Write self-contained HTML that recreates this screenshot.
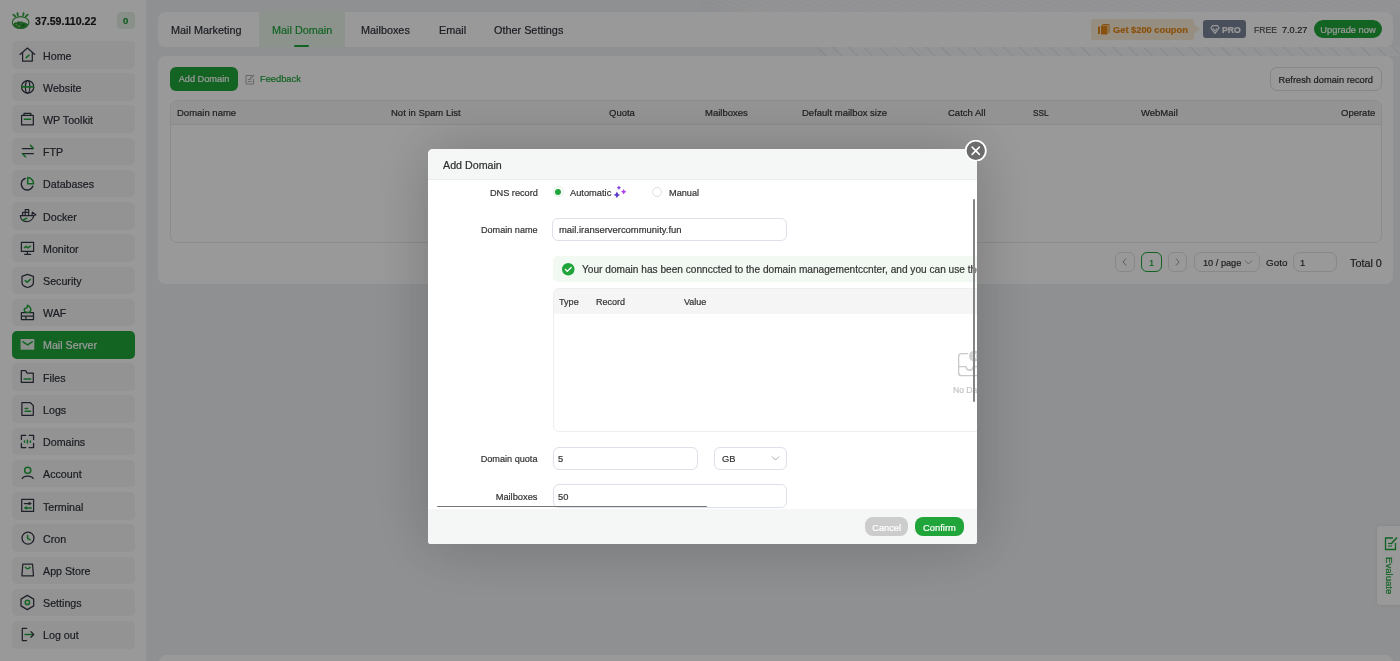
<!DOCTYPE html><html><head><meta charset="utf-8"><style>
html,body{margin:0;padding:0;width:1400px;height:661px;overflow:hidden;background:#eef0f3;font-family:"Liberation Sans",sans-serif;}
.t{position:absolute;white-space:nowrap;will-change:transform;-webkit-text-stroke:0.2px currentColor;}
</style></head><body>
<div style="position:absolute;left:700px;top:0px;width:700px;height:12px;box-sizing:border-box;background:repeating-linear-gradient(20deg, rgba(150,158,185,0) 0px, rgba(150,158,185,0) 3px, rgba(150,158,185,0.12) 3.5px, rgba(150,158,185,0) 4px), linear-gradient(90deg, rgba(255,255,255,0) 0px, rgba(255,255,255,0.4) 60px);"></div>
<div style="position:absolute;left:815px;top:47px;width:585px;height:9px;box-sizing:border-box;background:repeating-linear-gradient(45deg, rgba(150,158,185,0.0) 0px, rgba(150,158,185,0.0) 7px, rgba(150,158,185,0.22) 7.5px, rgba(150,158,185,0.0) 9px, rgba(150,158,185,0) 11px), linear-gradient(90deg, rgba(255,255,255,0) 0px, rgba(255,255,255,0.45) 30px);"></div>
<div style="position:absolute;left:0px;top:0px;width:146px;height:661px;box-sizing:border-box;background:#fff;"></div>
<svg style="position:absolute;left:8px;top:8px" width="30" height="26" viewBox="0 0 30 26">
<path d="M5 17 C6 14.5 7.5 13.8 8.6 14.6 C9.8 13.2 11.3 13 12.2 13.9 C13.5 13.2 15 13.6 15.7 14.6 C17 14 18.6 14.8 20 16.5 C19 19.5 16 20.6 12.6 20.6 C9 20.6 6 19.5 5 17 Z" fill="#2f9638"/>
<circle cx="11" cy="18.3" r="1.4" fill="#74b865"/><circle cx="15.5" cy="17.2" r="1.1" fill="#1f7a2d"/><circle cx="8.3" cy="16.6" r="0.9" fill="#8cc476"/><circle cx="13.5" cy="15.5" r="0.8" fill="#5fae55"/>
<ellipse cx="12.6" cy="14.5" rx="8.3" ry="5.9" fill="none" stroke="#38a040" stroke-width="1.15"/>
<g fill="#3aa345"><ellipse cx="6.3" cy="7.6" rx="1.0" ry="2.3" transform="rotate(-50 6.3 7.6)"/><ellipse cx="9.6" cy="6.2" rx="1.0" ry="2.3" transform="rotate(-12 9.6 6.2)"/><ellipse cx="15.4" cy="6.2" rx="1.0" ry="2.3" transform="rotate(12 15.4 6.2)"/><ellipse cx="18.8" cy="7.6" rx="1.0" ry="2.3" transform="rotate(50 18.8 7.6)"/></g>
</svg>
<div class="t" style="left:35px;top:13.30px;font-size:10.6px;line-height:16px;color:#1b1b1b;font-weight:bold;">37.59.110.22</div>
<div style="position:absolute;left:117px;top:12px;width:17.5px;height:17px;box-sizing:border-box;background:#e3f1e5;border-radius:4px;"></div>
<div class="t" style="left:117.2px;top:13.30px;font-size:9.6px;line-height:16px;color:#1f9a38;font-weight:bold;width:17.5px;text-align:center;">0</div>
<div style="position:absolute;left:12px;top:41.0px;width:122.5px;height:27.599999999999994px;box-sizing:border-box;background:#f5f6f7;border-radius:5px;"></div>
<svg style="position:absolute;left:15px;top:44px" width="25" height="20" viewBox="0 0 25 20" stroke-linecap="round" stroke-linejoin="round"><path d="M5 10.4 L12.4 4.1 L19.8 10.4" stroke="#323743" stroke-width="1.25" fill="none"/><path d="M7.6 8.6 V17.1 H17.3 V8.6" stroke="#323743" stroke-width="1.25" fill="none"/><path d="M11.2 13.7 L14.1 11.2" stroke="#20a53a" stroke-width="1.55" fill="none"/></svg>
<div class="t" style="left:42.5px;top:47.50px;font-size:10.7px;line-height:16px;color:#2d3139;font-weight:normal;">Home</div>
<div style="position:absolute;left:12px;top:73.22px;width:122.5px;height:27.599999999999994px;box-sizing:border-box;background:#f5f6f7;border-radius:5px;"></div>
<svg style="position:absolute;left:15px;top:76px" width="25" height="20" viewBox="0 0 25 20" stroke-linecap="round" stroke-linejoin="round"><ellipse cx="12.7" cy="10.9" rx="6.1" ry="6.2" stroke="#323743" stroke-width="1.25" fill="none"/><ellipse cx="12.6" cy="10.9" rx="2.2" ry="6.2" stroke="#323743" stroke-width="1.2" fill="none"/><path d="M7.2 10.9 H18.2" stroke="#20a53a" stroke-width="1.7" fill="none"/></svg>
<div class="t" style="left:42.5px;top:79.72px;font-size:10.7px;line-height:16px;color:#2d3139;font-weight:normal;">Website</div>
<div style="position:absolute;left:12px;top:105.44px;width:122.5px;height:27.599999999999994px;box-sizing:border-box;background:#f5f6f7;border-radius:5px;"></div>
<svg style="position:absolute;left:15px;top:108px" width="25" height="20" viewBox="0 0 25 20" stroke-linecap="round" stroke-linejoin="round"><path d="M6.6 7.3 H18.3 V16.9 H6.6 Z" stroke="#323743" stroke-width="1.25" fill="none"/><path d="M9 7.2 V5.4 H15.8 V7.2" stroke="#323743" stroke-width="1.25" fill="none"/><path d="M9.4 11.2 H15.6" stroke="#20a53a" stroke-width="1.55" fill="none"/></svg>
<div class="t" style="left:42.5px;top:111.94px;font-size:10.7px;line-height:16px;color:#2d3139;font-weight:normal;">WP Toolkit</div>
<div style="position:absolute;left:12px;top:137.66px;width:122.5px;height:27.599999999999994px;box-sizing:border-box;background:#f5f6f7;border-radius:5px;"></div>
<svg style="position:absolute;left:15px;top:140px" width="25" height="20" viewBox="0 0 25 20" stroke-linecap="round" stroke-linejoin="round"><path d="M7.4 8.5 H18.4" stroke="#323743" stroke-width="1.25" fill="none"/><path d="M7.4 13.6 H18.4" stroke="#323743" stroke-width="1.25" fill="none"/><path d="M15.5 5.4 L18.3 8.3" stroke="#20a53a" stroke-width="1.55" fill="none"/><path d="M7.6 13.8 L10.5 16.8" stroke="#20a53a" stroke-width="1.55" fill="none"/></svg>
<div class="t" style="left:42.5px;top:144.16px;font-size:10.7px;line-height:16px;color:#2d3139;font-weight:normal;">FTP</div>
<div style="position:absolute;left:12px;top:169.88px;width:122.5px;height:27.599999999999994px;box-sizing:border-box;background:#f5f6f7;border-radius:5px;"></div>
<svg style="position:absolute;left:15px;top:172px" width="25" height="20" viewBox="0 0 25 20" stroke-linecap="round" stroke-linejoin="round"><path d="M10.3 6.3 A6.0 6.0 0 1 0 17.9 14.0" stroke="#323743" stroke-width="1.25" fill="none"/><path d="M12.7 5.6 V11.7 H18.6 A6.0 6.0 0 0 0 12.7 5.6 Z" stroke="#20a53a" stroke-width="1.55" fill="none"/></svg>
<div class="t" style="left:42.5px;top:176.38px;font-size:10.7px;line-height:16px;color:#2d3139;font-weight:normal;">Databases</div>
<div style="position:absolute;left:12px;top:202.1px;width:122.5px;height:27.599999999999994px;box-sizing:border-box;background:#f5f6f7;border-radius:5px;"></div>
<svg style="position:absolute;left:15px;top:205px" width="25" height="20" viewBox="0 0 25 20" stroke-linecap="round" stroke-linejoin="round"><path d="M5.4 10.6 H17.8 C18.8 10.6 19.6 10.2 20.7 9.8 M5.4 10.6 C5.4 14.2 8 16.6 11.5 16.6 C15.5 16.6 18.2 13.6 18.9 10.6" stroke="#323743" stroke-width="1.25" fill="none"/><path d="M7.6 10.4 V7.4 H10.2 V10.4 M10.2 10.4 V4.6 H13.7 V10.4 M10.2 7.4 H13.7" stroke="#323743" stroke-width="1.2" fill="none"/><path d="M17 10.2 L17.4 7.2 L20.7 9.8" stroke="#323743" stroke-width="1.2" fill="none"/><path d="M8 15.1 L11.7 13.3" stroke="#20a53a" stroke-width="1.55" fill="none"/></svg>
<div class="t" style="left:42.5px;top:208.60px;font-size:10.7px;line-height:16px;color:#2d3139;font-weight:normal;">Docker</div>
<div style="position:absolute;left:12px;top:234.32px;width:122.5px;height:27.600000000000023px;box-sizing:border-box;background:#f5f6f7;border-radius:5px;"></div>
<svg style="position:absolute;left:15px;top:237px" width="25" height="20" viewBox="0 0 25 20" stroke-linecap="round" stroke-linejoin="round"><path d="M6.4 5.3 H18.6 V14.4 H6.4 Z" stroke="#323743" stroke-width="1.25" fill="none"/><path d="M12.4 14.5 V17.2 M9.6 17.3 H15.6" stroke="#323743" stroke-width="1.25" fill="none"/><path d="M9.4 10.6 L11.3 9.4 L13 11 L15.4 9.2" stroke="#20a53a" stroke-width="1.55" fill="none"/></svg>
<div class="t" style="left:42.5px;top:240.82px;font-size:10.7px;line-height:16px;color:#2d3139;font-weight:normal;">Monitor</div>
<div style="position:absolute;left:12px;top:266.54px;width:122.5px;height:27.599999999999966px;box-sizing:border-box;background:#f5f6f7;border-radius:5px;"></div>
<svg style="position:absolute;left:15px;top:270px" width="25" height="20" viewBox="0 0 25 20" stroke-linecap="round" stroke-linejoin="round"><path d="M12.5 4.3 L18.4 6.4 V12.6 C18.4 14.8 15.8 16.8 12.6 17.5 C9.4 16.8 7 14.8 7 12.6 V6.4 Z" stroke="#323743" stroke-width="1.25" fill="none"/><path d="M10.3 10.6 L12.2 12.3 L15.3 9.4" stroke="#20a53a" stroke-width="1.55" fill="none"/></svg>
<div class="t" style="left:42.5px;top:273.04px;font-size:10.7px;line-height:16px;color:#2d3139;font-weight:normal;">Security</div>
<div style="position:absolute;left:12px;top:298.76px;width:122.5px;height:27.600000000000023px;box-sizing:border-box;background:#f5f6f7;border-radius:5px;"></div>
<svg style="position:absolute;left:15px;top:302px" width="25" height="20" viewBox="0 0 25 20" stroke-linecap="round" stroke-linejoin="round"><path d="M6.4 10.6 H18.5 V17.6 H6.4 Z M6.4 14.1 H18.5 M10.9 14.1 V17.6" stroke="#323743" stroke-width="1.25" fill="none"/><path d="M12.4 3.2 C14.5 4.5 15.9 6.2 15.9 8 C15.9 9.6 14.3 10.4 12.4 10.4 C10.5 10.4 9.2 9.4 9.2 7.8 C9.2 6.8 10 6.2 10.8 6.2 C11.6 6.2 12.4 5.5 12.4 3.2 Z" stroke="#20a53a" stroke-width="1.4" fill="none"/></svg>
<div class="t" style="left:42.5px;top:305.26px;font-size:10.7px;line-height:16px;color:#2d3139;font-weight:normal;">WAF</div>
<div style="position:absolute;left:12px;top:330.98px;width:122.5px;height:27.599999999999966px;box-sizing:border-box;background:#20a53a;border-radius:5px;"></div>
<svg style="position:absolute;left:15px;top:334px" width="25" height="20" viewBox="0 0 25 20" stroke-linecap="round" stroke-linejoin="round"><rect x="5.6" y="5" width="13.7" height="10.7" fill="#e6f2e8"/><path d="M8 7.8 L12.6 10.8 L17.2 7.8" stroke="#20a53a" stroke-width="1.5" fill="none"/></svg>
<div class="t" style="left:42.5px;top:337.48px;font-size:10.7px;line-height:16px;color:#fff;font-weight:normal;">Mail Server</div>
<div style="position:absolute;left:12px;top:363.2px;width:122.5px;height:27.600000000000023px;box-sizing:border-box;background:#f5f6f7;border-radius:5px;"></div>
<svg style="position:absolute;left:15px;top:366px" width="25" height="20" viewBox="0 0 25 20" stroke-linecap="round" stroke-linejoin="round"><path d="M6.3 4.7 H10.6 L12.1 7.1 H18.3 V16.3 H6.3 Z" stroke="#323743" stroke-width="1.25" fill="none"/><path d="M9.2 13 H15.6" stroke="#20a53a" stroke-width="1.7" fill="none"/></svg>
<div class="t" style="left:42.5px;top:369.70px;font-size:10.7px;line-height:16px;color:#2d3139;font-weight:normal;">Files</div>
<div style="position:absolute;left:12px;top:395.42px;width:122.5px;height:27.599999999999966px;box-sizing:border-box;background:#f5f6f7;border-radius:5px;"></div>
<svg style="position:absolute;left:15px;top:399px" width="25" height="20" viewBox="0 0 25 20" stroke-linecap="round" stroke-linejoin="round"><path d="M6.9 3.5 H15.2 L18.3 6.6 V16.3 H6.9 Z" stroke="#323743" stroke-width="1.25" fill="none"/><path d="M10.1 9.4 H12.6 M10.1 12.3 H15.6" stroke="#20a53a" stroke-width="1.55" fill="none"/></svg>
<div class="t" style="left:42.5px;top:401.92px;font-size:10.7px;line-height:16px;color:#2d3139;font-weight:normal;">Logs</div>
<div style="position:absolute;left:12px;top:427.64px;width:122.5px;height:27.600000000000023px;box-sizing:border-box;background:#f5f6f7;border-radius:5px;"></div>
<svg style="position:absolute;left:15px;top:431px" width="25" height="20" viewBox="0 0 25 20" stroke-linecap="round" stroke-linejoin="round"><path d="M6.4 8.5 V4.3 H10.8 M14.2 4.3 H18.6 V8.5 M18.6 12.5 V16.6 H14.2 M10.8 16.6 H6.4 V12.5" stroke="#323743" stroke-width="1.3" fill="none"/><path d="M9.5 9.9 V11.3 M12.4 9.2 V12 M15.4 9.9 V11.3" stroke="#20a53a" stroke-width="1.5" fill="none"/></svg>
<div class="t" style="left:42.5px;top:434.14px;font-size:10.7px;line-height:16px;color:#2d3139;font-weight:normal;">Domains</div>
<div style="position:absolute;left:12px;top:459.86px;width:122.5px;height:27.599999999999966px;box-sizing:border-box;background:#f5f6f7;border-radius:5px;"></div>
<svg style="position:absolute;left:15px;top:463px" width="25" height="20" viewBox="0 0 25 20" stroke-linecap="round" stroke-linejoin="round"><circle cx="12.7" cy="7.3" r="3.1" stroke="#20a53a" stroke-width="1.5" fill="none"/><path d="M7.2 15.5 C8.8 12.2 16.6 12.2 18.2 15.5" stroke="#323743" stroke-width="1.25" fill="none"/></svg>
<div class="t" style="left:42.5px;top:466.36px;font-size:10.7px;line-height:16px;color:#2d3139;font-weight:normal;">Account</div>
<div style="position:absolute;left:12px;top:492.08px;width:122.5px;height:27.599999999999966px;box-sizing:border-box;background:#f5f6f7;border-radius:5px;"></div>
<svg style="position:absolute;left:15px;top:495px" width="25" height="20" viewBox="0 0 25 20" stroke-linecap="round" stroke-linejoin="round"><path d="M6.7 4.4 H18.6 V16.4 H6.7 Z" stroke="#323743" stroke-width="1.25" fill="none"/><path d="M9.3 8.5 H15.5" stroke="#323743" stroke-width="1.25" fill="none"/><path d="M14.2 7.2 L16.4 8.5 L14.2 9.8 Z" fill="#323743" stroke="#323743" stroke-width="0.6"/><path d="M16.3 12.9 H10.5" stroke="#20a53a" stroke-width="1.55" fill="none"/><path d="M11.4 11.5 L9.2 12.9 L11.4 14.3 Z" fill="#20a53a" stroke="#20a53a" stroke-width="0.6"/></svg>
<div class="t" style="left:42.5px;top:498.58px;font-size:10.7px;line-height:16px;color:#2d3139;font-weight:normal;">Terminal</div>
<div style="position:absolute;left:12px;top:524.3px;width:122.5px;height:27.600000000000023px;box-sizing:border-box;background:#f5f6f7;border-radius:5px;"></div>
<svg style="position:absolute;left:15px;top:528px" width="25" height="20" viewBox="0 0 25 20" stroke-linecap="round" stroke-linejoin="round"><circle cx="13.0" cy="10.1" r="6.0" stroke="#323743" stroke-width="1.3" fill="none"/><path d="M12.6 7.4 V10.3 L15.2 11.8" stroke="#20a53a" stroke-width="1.55" fill="none"/></svg>
<div class="t" style="left:42.5px;top:530.80px;font-size:10.7px;line-height:16px;color:#2d3139;font-weight:normal;">Cron</div>
<div style="position:absolute;left:12px;top:556.52px;width:122.5px;height:27.600000000000023px;box-sizing:border-box;background:#f5f6f7;border-radius:5px;"></div>
<svg style="position:absolute;left:15px;top:560px" width="25" height="20" viewBox="0 0 25 20" stroke-linecap="round" stroke-linejoin="round"><path d="M7.8 4.2 H17.5 L18.5 15.8 H6.9 Z" stroke="#323743" stroke-width="1.25" fill="none"/><path d="M10.5 7.3 C11.3 9.1 13.9 9.1 14.9 7.3" stroke="#20a53a" stroke-width="1.55" fill="none"/></svg>
<div class="t" style="left:42.5px;top:563.02px;font-size:10.7px;line-height:16px;color:#2d3139;font-weight:normal;">App Store</div>
<div style="position:absolute;left:12px;top:588.74px;width:122.5px;height:27.600000000000023px;box-sizing:border-box;background:#f5f6f7;border-radius:5px;"></div>
<svg style="position:absolute;left:15px;top:592px" width="25" height="20" viewBox="0 0 25 20" stroke-linecap="round" stroke-linejoin="round"><path d="M12.3 3.4 L18.7 7.1 V13.9 L12.3 17.6 L6 13.9 V7.1 Z" stroke="#323743" stroke-width="1.25" fill="none"/><circle cx="12.4" cy="10.45" r="2.1" stroke="#20a53a" stroke-width="1.5" fill="none"/></svg>
<div class="t" style="left:42.5px;top:595.24px;font-size:10.7px;line-height:16px;color:#2d3139;font-weight:normal;">Settings</div>
<div style="position:absolute;left:12px;top:620.96px;width:122.5px;height:27.59999999999991px;box-sizing:border-box;background:#f5f6f7;border-radius:5px;"></div>
<svg style="position:absolute;left:15px;top:624px" width="25" height="20" viewBox="0 0 25 20" stroke-linecap="round" stroke-linejoin="round"><path d="M11.6 4.4 H7.3 V16.5 H11.6" stroke="#323743" stroke-width="1.25" fill="none"/><path d="M10.1 10.45 H18.2" stroke="#20a53a" stroke-width="1.55" fill="none"/><path d="M15.9 7.6 L18.7 10.45 L15.9 13.3" stroke="#323743" stroke-width="1.25" fill="none"/></svg>
<div class="t" style="left:42.5px;top:627.46px;font-size:10.7px;line-height:16px;color:#2d3139;font-weight:normal;">Log out</div>
<div style="position:absolute;left:158px;top:12px;width:1235px;height:35px;box-sizing:border-box;background:#fff;border-radius:7px;overflow:hidden;"></div>
<div style="position:absolute;left:259px;top:12px;width:86px;height:35px;box-sizing:border-box;background:#e9f5eb;"></div>
<div style="position:absolute;left:294px;top:45px;width:15px;height:2px;box-sizing:border-box;background:#20a53a;border-radius:1px;"></div>
<div class="t" style="left:171.4px;top:21.90px;font-size:10.85px;line-height:16px;color:#2d3139;font-weight:normal;">Mail Marketing</div>
<div class="t" style="left:272px;top:21.90px;font-size:10.85px;line-height:16px;color:#20a53a;font-weight:normal;">Mail Domain</div>
<div class="t" style="left:361px;top:21.90px;font-size:10.85px;line-height:16px;color:#2d3139;font-weight:normal;">Mailboxes</div>
<div class="t" style="left:439.4px;top:21.90px;font-size:10.85px;line-height:16px;color:#2d3139;font-weight:normal;">Email</div>
<div class="t" style="left:494.3px;top:21.90px;font-size:10.85px;line-height:16px;color:#2d3139;font-weight:normal;">Other Settings</div>
<div style="position:absolute;left:1091px;top:18.6px;width:103px;height:21.1px;box-sizing:border-box;background:#fbeed8;border-radius:2px;"></div>
<div style="position:absolute;left:1194px;top:23.5px;width:0;height:0;border-top:5.5px solid transparent;border-bottom:5.5px solid transparent;border-left:6px solid #fbeed8;"></div>
<svg style="position:absolute;left:1097.5px;top:24px" width="12" height="11" viewBox="0 0 12 11"><rect x="0" y="2.5" width="2" height="7.5" fill="#e3881a"/><rect x="3" y="1.5" width="6.5" height="9" fill="#e3881a"/><path d="M4.5 0.5 H11 V9" fill="none" stroke="#e3881a" stroke-width="1"/></svg>
<div class="t" style="left:1112.5px;top:22.00px;font-size:9.3px;line-height:16px;color:#e3881a;font-weight:bold;">Get $200 coupon</div>
<div style="position:absolute;left:1203px;top:20.3px;width:43px;height:17.499999999999996px;box-sizing:border-box;background:#7a8599;border-radius:3px;"></div>
<svg style="position:absolute;left:1209.5px;top:24.8px" width="10" height="9" viewBox="0 0 10 9"><path d="M0.8 3 L2.6 0.7 H7.4 L9.2 3 L5 8.3 Z" fill="none" stroke="#fff" stroke-width="1.2" stroke-linejoin="round"/><path d="M2.8 3.4 L5 6 L7.2 3.4" fill="none" stroke="#fff" stroke-width="1.1"/></svg>
<div class="t" style="left:1222.4px;top:22.00px;font-size:8.7px;line-height:16px;color:#fff;font-weight:bold;">PRO</div>
<div class="t" style="left:1253.7px;top:22.00px;font-size:8.6px;line-height:16px;color:#555;font-weight:normal;">FREE</div>
<div class="t" style="left:1282.3px;top:22.00px;font-size:9.1px;line-height:16px;color:#333;font-weight:normal;">7.0.27</div>
<div style="position:absolute;left:1313.6px;top:20.3px;width:68.10000000000014px;height:17.499999999999996px;box-sizing:border-box;background:#20a53a;border-radius:9px;"></div>
<div class="t" style="left:1313.6px;top:22.00px;font-size:9.3px;line-height:16px;color:#fff;font-weight:normal;width:68px;text-align:center;">Upgrade now</div>
<div style="position:absolute;left:158px;top:55.7px;width:1234.5px;height:228.3px;box-sizing:border-box;background:#fff;border-radius:7px;"></div>
<div style="position:absolute;left:170px;top:67.3px;width:68px;height:23.5px;box-sizing:border-box;background:#20a53a;border-radius:6px;"></div>
<div class="t" style="left:170px;top:71.40px;font-size:9.2px;line-height:16px;color:#fff;font-weight:normal;width:68px;text-align:center;">Add Domain</div>
<svg style="position:absolute;left:245px;top:73.5px" width="10" height="11" viewBox="0 0 10 11"><path d="M7 1.5 H1 V10 H8.5 V5" fill="none" stroke="#aaa" stroke-width="1"/><path d="M3 5.5 H5.5 M3 7.5 H6.5" stroke="#aaa" stroke-width="1"/><path d="M5 5 L9 1" stroke="#aaa" stroke-width="1.2"/></svg>
<div class="t" style="left:260px;top:71.10px;font-size:9.3px;line-height:16px;color:#20a53a;font-weight:normal;">Feedback</div>
<div style="position:absolute;left:1270.2px;top:67.2px;width:111.5px;height:23.5px;box-sizing:border-box;border:1px solid #dcdfe6;border-radius:7px;"></div>
<div class="t" style="left:1270.2px;top:71.80px;font-size:9.3px;line-height:16px;color:#333;font-weight:normal;width:111.5px;text-align:center;">Refresh domain record</div>
<div style="position:absolute;left:170px;top:100px;width:1211.5px;height:143px;box-sizing:border-box;border:1px solid #e8e9ec;border-radius:7px;overflow:hidden;"></div>
<div style="position:absolute;left:171px;top:101px;width:1209.5px;height:23.5px;box-sizing:border-box;background:#f6f6f7;border-bottom:1px solid #e8e9ec;border-radius:6px 6px 0 0;"></div>
<div class="t" style="left:176.9px;top:105.00px;font-size:9.5px;line-height:16px;color:#333;font-weight:normal;">Domain name</div>
<div class="t" style="left:391px;top:105.00px;font-size:9.5px;line-height:16px;color:#333;font-weight:normal;">Not in Spam List</div>
<div class="t" style="left:608.8px;top:105.00px;font-size:9.5px;line-height:16px;color:#333;font-weight:normal;">Quota</div>
<div class="t" style="left:705.4px;top:105.00px;font-size:9.5px;line-height:16px;color:#333;font-weight:normal;">Mailboxes</div>
<div class="t" style="left:802.3px;top:105.00px;font-size:9.5px;line-height:16px;color:#333;font-weight:normal;">Default mailbox size</div>
<div class="t" style="left:947.8px;top:105.00px;font-size:9.5px;line-height:16px;color:#333;font-weight:normal;">Catch All</div>
<div class="t" style="left:1141.1px;top:105.00px;font-size:9.5px;line-height:16px;color:#333;font-weight:normal;">WebMail</div>
<div class="t" style="left:1032.5px;top:105.00px;font-size:8.3px;line-height:16px;color:#333;font-weight:normal;">SSL</div>
<div class="t" style="right:25px;top:105.00px;font-size:9.5px;line-height:16px;color:#333;font-weight:normal;">Operate</div>
<div style="position:absolute;left:1114.6px;top:252.1px;width:20.100000000000136px;height:19.799999999999983px;box-sizing:border-box;border:1px solid #e1e3e8;border-radius:6px;"></div>
<svg style="position:absolute;left:1120px;top:257px" width="9" height="10" viewBox="0 0 9 10"><path d="M6 1.5 L3 5 L6 8.5" fill="none" stroke="#999" stroke-width="1"/></svg>
<div style="position:absolute;left:1140.7px;top:252.1px;width:21.0px;height:19.799999999999983px;box-sizing:border-box;border:1px solid #20a53a;border-radius:6px;"></div>
<div class="t" style="left:1140.7px;top:254.50px;font-size:9.3px;line-height:16px;color:#20a53a;font-weight:normal;width:21px;text-align:center;">1</div>
<div style="position:absolute;left:1167.5px;top:252.1px;width:19.90000000000009px;height:19.799999999999983px;box-sizing:border-box;border:1px solid #e1e3e8;border-radius:6px;"></div>
<svg style="position:absolute;left:1173px;top:257px" width="9" height="10" viewBox="0 0 9 10"><path d="M3 1.5 L6 5 L3 8.5" fill="none" stroke="#999" stroke-width="1"/></svg>
<div style="position:absolute;left:1193.6px;top:252.1px;width:66.30000000000018px;height:19.799999999999983px;box-sizing:border-box;border:1px solid #e1e3e8;border-radius:7px;"></div>
<div class="t" style="left:1202.9px;top:254.50px;font-size:9.2px;line-height:16px;color:#333;font-weight:normal;">10 / page</div>
<svg style="position:absolute;left:1244px;top:258px" width="9" height="8" viewBox="0 0 9 8"><path d="M1 2.5 L4.5 6 L8 2.5" fill="none" stroke="#aaa" stroke-width="1"/></svg>
<div class="t" style="left:1265.6px;top:254.50px;font-size:9.9px;line-height:16px;color:#333;font-weight:normal;">Goto</div>
<div style="position:absolute;left:1293.3px;top:252.1px;width:43.5px;height:19.799999999999983px;box-sizing:border-box;border:1px solid #e1e3e8;border-radius:7px;"></div>
<div class="t" style="left:1300px;top:254.50px;font-size:9.3px;line-height:16px;color:#333;font-weight:normal;">1</div>
<div class="t" style="right:18.700000000000045px;top:255.00px;font-size:10.8px;line-height:16px;color:#333;font-weight:normal;">Total 0</div>
<div style="position:absolute;left:158.5px;top:655px;width:1234.0px;height:45px;box-sizing:border-box;background:#fff;border-radius:7px;"></div>
<div style="position:absolute;left:1376.6px;top:526px;width:33.40000000000009px;height:79px;box-sizing:border-box;background:#fff;border-radius:3px;box-shadow:0 0 4px rgba(0,0,0,0.08);"></div>
<svg style="position:absolute;left:1384px;top:536px" width="14" height="15" viewBox="0 0 14 15"><path d="M9 2 H1.5 V13.5 H11.5 V7" fill="none" stroke="#20a53a" stroke-width="1.3"/><path d="M4 7.5 H7 M4 10 H8" stroke="#20a53a" stroke-width="1.2"/><path d="M7 8 L13 1.5" stroke="#20a53a" stroke-width="1.6"/></svg>
<div class="t" style="left:1381px;top:556.5px;width:17px;height:40px;writing-mode:vertical-rl;font-size:9.6px;line-height:17px;color:#20a53a;">Evaluate</div>
<div style="position:absolute;left:0px;top:0px;width:1400px;height:661px;box-sizing:border-box;background:rgba(0,0,0,0.4);"></div>
<div style="position:absolute;left:428px;top:149px;width:549px;height:394.5px;background:#fff;border-radius:5px 5px 3px 3px;overflow:hidden;box-shadow:1px 1px 60px rgba(0,0,0,0.22);">
<div style="position:absolute;left:0px;top:0px;width:549px;height:30.6px;box-sizing:border-box;background:#f5f7f6;border-bottom:1px solid #eceeed;"></div>
<div class="t" style="left:15.1px;top:8.10px;font-size:10.7px;line-height:16px;color:#2d2d2d;font-weight:normal;">Add Domain</div>
<div class="t" style="left:0;width:109.89999999999998px;text-align:right;top:35.50px;font-size:9.2px;line-height:16px;color:#333;font-weight:normal;">DNS record</div>
<div style="position:absolute;left:124.6px;top:36.9px;width:11.400000000000006px;height:11.399999999999999px;box-sizing:border-box;border:1px solid #dcf3df;border-radius:50%;background:#fff;"></div>
<div style="position:absolute;left:127.3px;top:39.6px;width:6.000000000000014px;height:6.0px;box-sizing:border-box;background:#20a53a;border-radius:50%;"></div>
<div class="t" style="left:142.4px;top:35.50px;font-size:9.3px;line-height:16px;color:#333;font-weight:normal;">Automatic</div>
<svg style="position:absolute;left:185px;top:35.5px" width="14" height="14" viewBox="0 0 14 14"><path d="M5.9 0.60 Q6.30 2.40 8.10 2.8 Q6.30 3.20 5.9 5.00 Q5.50 3.20 3.70 2.8 Q5.50 2.40 5.9 0.60 Z" fill="#7b3ad9"/><path d="M10.7 4.10 Q11.19 6.31 13.40 6.8 Q11.19 7.29 10.7 9.50 Q10.21 7.29 8.00 6.8 Q10.21 6.31 10.7 4.10 Z" fill="#b33cf0"/><path d="M3.9 6.60 Q4.49 9.31 7.20 9.9 Q4.49 10.49 3.9 13.20 Q3.31 10.49 0.60 9.9 Q3.31 9.31 3.9 6.60 Z" fill="#5a3bcc"/></svg>
<div style="position:absolute;left:223.6px;top:37.6px;width:10.800000000000011px;height:10.799999999999997px;box-sizing:border-box;border:1px solid #dcdfe6;border-radius:50%;background:#fff;"></div>
<div class="t" style="left:241px;top:35.50px;font-size:9.2px;line-height:16px;color:#333;font-weight:normal;">Manual</div>
<div class="t" style="left:0;width:109.60000000000002px;text-align:right;top:73.10px;font-size:9.1px;line-height:16px;color:#333;font-weight:normal;">Domain name</div>
<div style="position:absolute;left:124.4px;top:69.2px;width:234.20000000000002px;height:22.89999999999999px;box-sizing:border-box;border:1px solid #dedfe8;border-radius:6px;"></div>
<div class="t" style="left:130.6px;top:73.30px;font-size:9.45px;line-height:16px;color:#333;font-weight:normal;">mail.iranservercommunity.fun</div>
<div style="position:absolute;left:124.5px;top:106.9px;width:447.5px;height:26.299999999999983px;box-sizing:border-box;background:#f1f9f2;border-radius:5px;"></div>
<svg style="position:absolute;left:134.3px;top:114.3px" width="12.5" height="12.5" viewBox="0 0 12 12"><circle cx="6" cy="6" r="6" fill="#20a53a"/><path d="M3.3 6.2 L5.2 8 L8.8 4.3" fill="none" stroke="#fff" stroke-width="1.3" stroke-linecap="round" stroke-linejoin="round"/></svg>
<div class="t" style="left:154px;top:112.70px;font-size:10.15px;line-height:16px;color:#333;font-weight:normal;">Your domain has been connccted to the domain managementccnter, and you can use the</div>
<div style="position:absolute;left:124.5px;top:139.4px;width:447.5px;height:143.6px;box-sizing:border-box;border:1px solid #eeeeee;border-radius:6px;overflow:hidden;"></div>
<div style="position:absolute;left:125.5px;top:140.4px;width:446.5px;height:24.599999999999994px;box-sizing:border-box;background:#f5f5f5;"></div>
<div class="t" style="left:131px;top:145.00px;font-size:9.1px;line-height:16px;color:#333;font-weight:normal;">Type</div>
<div class="t" style="left:167.9px;top:145.00px;font-size:9.0px;line-height:16px;color:#333;font-weight:normal;">Record</div>
<div class="t" style="left:255.6px;top:145.00px;font-size:9.0px;line-height:16px;color:#333;font-weight:normal;">Value</div>
<svg style="position:absolute;left:530px;top:201px" width="24" height="28" viewBox="0 0 24 28"><path d="M10 3.6 H3.6 Q0.6 3.6 0.6 6.6 V22.6 Q0.6 25.6 3.6 25.6 H22" fill="none" stroke="#c9c9c9" stroke-width="1.4"/><path d="M0.6 16.6 H8 Q8.6 20.2 11.6 20.2 Q14.6 20.2 15.2 16.6 H22" fill="none" stroke="#c9c9c9" stroke-width="1.4"/><circle cx="16.6" cy="6" r="5.6" fill="#cfcfcf"/><path d="M14.6 4 L18.6 8 M18.6 4 L14.6 8" stroke="#fff" stroke-width="1.2"/></svg>
<div class="t" style="left:524.9px;top:233.30px;font-size:8.6px;line-height:16px;color:#c4c4c4;font-weight:normal;">No Data</div>
<div class="t" style="left:0;width:109.5px;text-align:right;top:301.80px;font-size:9.15px;line-height:16px;color:#333;font-weight:normal;">Domain quota</div>
<div style="position:absolute;left:124.5px;top:297.6px;width:145.7px;height:23.0px;box-sizing:border-box;border:1px solid #dedfe8;border-radius:6px;"></div>
<div class="t" style="left:130.4px;top:301.80px;font-size:9.3px;line-height:16px;color:#333;font-weight:normal;">5</div>
<div style="position:absolute;left:285.5px;top:297.6px;width:73.10000000000002px;height:23.0px;box-sizing:border-box;border:1px solid #dedfe8;border-radius:6px;"></div>
<div class="t" style="left:294.4px;top:301.80px;font-size:9.3px;line-height:16px;color:#333;font-weight:normal;">GB</div>
<svg style="position:absolute;left:342.5px;top:305.5px" width="9" height="7" viewBox="0 0 9 7"><path d="M1 1.5 L4.5 5 L8 1.5" fill="none" stroke="#aaa" stroke-width="1"/></svg>
<div class="t" style="left:0;width:109.5px;text-align:right;top:339.80px;font-size:9.3px;line-height:16px;color:#333;font-weight:normal;">Mailboxes</div>
<div style="position:absolute;left:124.5px;top:335.4px;width:234.10000000000002px;height:23.30000000000001px;box-sizing:border-box;border:1px solid #dedfe8;border-radius:6px;"></div>
<div class="t" style="left:130.4px;top:339.80px;font-size:9.3px;line-height:16px;color:#333;font-weight:normal;">50</div>
<div style="position:absolute;left:545.2px;top:50px;width:1.7999999999999545px;height:203px;box-sizing:border-box;background:#858585;border-radius:1px;"></div>
<div style="position:absolute;left:9px;top:356.8px;width:270px;height:1.599999999999966px;box-sizing:border-box;background:#777;border-radius:1px;"></div>
<div style="position:absolute;left:0px;top:360px;width:549px;height:34.5px;box-sizing:border-box;background:#f5f7f6;"></div>
<div style="position:absolute;left:436.9px;top:368.4px;width:43.30000000000001px;height:18.900000000000034px;box-sizing:border-box;background:#cccccc;border-radius:8px;"></div>
<div class="t" style="left:436.9px;top:370.60px;font-size:9.25px;line-height:16px;color:#fff;font-weight:normal;width:43.3px;text-align:center;">Cancel</div>
<div style="position:absolute;left:487.1px;top:368.4px;width:48.89999999999998px;height:18.900000000000034px;box-sizing:border-box;background:#20a53a;border-radius:8px;"></div>
<div class="t" style="left:487.1px;top:370.60px;font-size:9.4px;line-height:16px;color:#fff;font-weight:normal;width:48.9px;text-align:center;">Confirm</div>
</div>
<svg style="position:absolute;left:965px;top:139.8px" width="21.5" height="21.5" viewBox="0 0 22 22"><circle cx="11" cy="11" r="10.3" fill="#6b6b6b" stroke="#fff" stroke-width="1.8"/><path d="M7.3 7.3 L14.7 14.7 M14.7 7.3 L7.3 14.7" stroke="#fff" stroke-width="1.5" stroke-linecap="round"/></svg>
</body></html>
